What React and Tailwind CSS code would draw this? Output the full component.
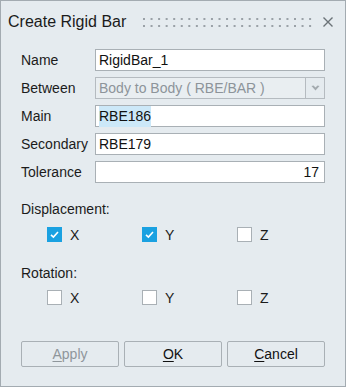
import React from 'react';

const FONT = { fontFamily: '"Liberation Sans", Arial, sans-serif' };

function GripDots() {
    const dots = [];
    for (let i = 0; i < 23; i++) {
        dots.push(<rect key={'a' + i} x={i * 7.55} y={0} width={2} height={2} fill="#9aa1a7" />);
        dots.push(<rect key={'b' + i} x={i * 7.55} y={7} width={2} height={2} fill="#9aa1a7" />);
    }
    return (
        <svg width="170" height="9" className="shrink-0">
            {dots}
        </svg>
    );
}

function Field({ label, children }) {
    return (
        <div className="flex items-center h-[22px]">
            <div className="w-[74px] text-[14px] text-[#1b1b1b] leading-none">{label}</div>
            {children}
        </div>
    );
}

function Check({ checked, label }) {
    return (
        <div className="flex items-center w-[95px]">
            {checked ? (
                <div className="w-[15px] h-[15px] bg-[#1aa1e1] flex items-center justify-center">
                    <svg width="11" height="11" viewBox="0 0 11 11">
                        <path d="M2 5.8 L4.4 8 L9 3" stroke="white" strokeWidth="1.6" fill="none" />
                    </svg>
                </div>
            ) : (
                <div className="w-[15px] h-[15px] bg-white border border-[#a9b0b5]" />
            )}
            <span className="ml-[8px] text-[14px] text-[#1b1b1b] leading-none">{label}</span>
        </div>
    );
}

export default function App() {
    return (
        <div
            style={FONT}
            className="w-[346px] h-[387px] bg-[#e5ebef] border border-[#a3abb1] flex flex-col"
        >
            {/* Title bar */}
            <div className="h-[42px] flex items-center pl-[7px] pr-[12px] shrink-0">
                <div className="w-[135px] text-[16px] text-[#1b1b1b] leading-none">Create Rigid Bar</div>
                <GripDots />
                <svg width="10" height="10" viewBox="0 0 10 10" className="ml-[10px]">
                    <path d="M0.5 0.5 L9.5 9.5 M9.5 0.5 L0.5 9.5" stroke="#6b7277" strokeWidth="1.4" />
                </svg>
            </div>

            <div className="pl-[20px] pr-[20px] mt-[6px] flex flex-col gap-[6px]">
                <Field label="Name">
                    <div className="w-[230px] h-[22px] bg-white border border-[#a9b0b5] flex items-center pl-[3px] text-[14px] text-[#111]">
                        RigidBar_1
                    </div>
                </Field>
                <Field label="Between">
                    <div className="flex">
                        <div className="w-[211px] h-[22px] bg-[#e9eef1] border border-[#b5bbc0] flex items-center pl-[3px] text-[14px] text-[#8d949a]">
                            Body to Body ( RBE/BAR )
                        </div>
                        <div className="w-[19px] h-[22px] border border-l-0 border-[#b5bbc0] flex items-center justify-center">
                            <svg width="9" height="6" viewBox="0 0 9 6">
                                <path d="M0.5 1 L2.5 0.5 L4.5 2.5 L6.5 0.5 L8.5 1 L4.5 5.5 Z" fill="#a3aaaf" />
                            </svg>
                        </div>
                    </div>
                </Field>
                <Field label="Main">
                    <div className="w-[230px] h-[22px] bg-white border border-[#a9b0b5] flex items-center pl-[3px] text-[14px] text-[#111]">
                        <span className="bg-[#cce8f8]">RBE186</span>
                    </div>
                </Field>
                <Field label="Secondary">
                    <div className="w-[230px] h-[22px] bg-white border border-[#a9b0b5] flex items-center pl-[3px] text-[14px] text-[#111]">
                        RBE179
                    </div>
                </Field>
                <Field label="Tolerance">
                    <div className="w-[230px] h-[22px] bg-white border border-[#a9b0b5] flex items-center justify-end pr-[5px] text-[14px] text-[#111]">
                        17
                    </div>
                </Field>
            </div>

            <div className="pl-[20px] mt-[18px] text-[14px] text-[#1b1b1b] leading-[16px]">Displacement:</div>
            <div className="pl-[46px] mt-[10px] flex h-[15px]">
                <Check checked label="X" />
                <Check checked label="Y" />
                <Check label="Z" />
            </div>

            <div className="pl-[20px] mt-[23px] text-[14px] text-[#1b1b1b] leading-[16px]">Rotation:</div>
            <div className="pl-[46px] mt-[9px] flex h-[15px]">
                <Check label="X" />
                <Check label="Y" />
                <Check label="Z" />
            </div>

            <div className="pl-[20px] mt-[36px] flex gap-[5px]">
                <button className="w-[98px] h-[26px] border border-[#a9b0b5] rounded-[2px] text-[14px] text-[#8f969b]">
                    <span className="underline underline-offset-2">A</span>pply
                </button>
                <button className="w-[98px] h-[26px] border border-[#a9b0b5] rounded-[2px] text-[14px] text-[#111]">
                    <span className="underline underline-offset-2">O</span>K
                </button>
                <button className="w-[98px] h-[26px] border border-[#a9b0b5] rounded-[2px] text-[14px] text-[#111]">
                    <span className="underline underline-offset-2">C</span>ancel
                </button>
            </div>
        </div>
    );
}
